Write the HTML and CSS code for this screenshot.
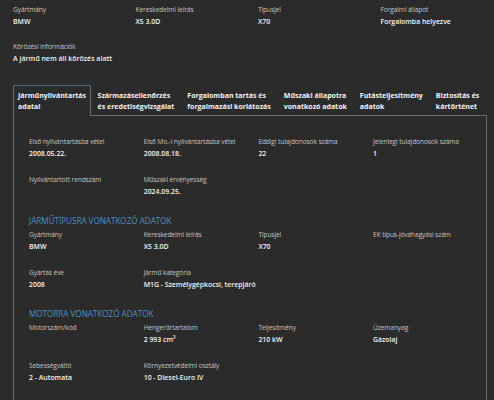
FILE: index.html
```html
<!DOCTYPE html>
<html lang="hu">
<head>
<meta charset="utf-8">
<link rel="stylesheet" href="styles.css">
</head>
<body>
<div class="summary">
  <div class="grid4">
    <div class="field"><div class="label">Gyártmány</div><div class="value">BMW</div></div>
    <div class="field"><div class="label">Kereskedelmi leírás</div><div class="value">X5 3.0D</div></div>
    <div class="field"><div class="label">Típusjel</div><div class="value">X70</div></div>
    <div class="field"><div class="label">Forgalmi állapot</div><div class="value">Forgalomba helyezve</div></div>
  </div>
  <div class="field wanted"><div class="label">Körözési információk</div><div class="value big">A jármű nem áll körözés alatt</div></div>
</div>

<div class="tabs">
  <div class="tab active">Járműnyilvántartás<br>adatai</div>
  <div class="tab">Származásellenőrzés<br>és eredetiségvizsgálat</div>
  <div class="tab">Forgalomban tartás és<br>forgalmazási korlátozás</div>
  <div class="tab">Műszaki állapotra<br>vonatkozó adatok</div>
  <div class="tab">Futásteljesítmény<br>adatok</div>
  <div class="tab">Biztosítás és<br>kártörténet</div>
</div>

<div class="panel">
  <div class="pgrid">
    <div class="field"><div class="label">Első nyilvántartásba vétel</div><div class="value">2008.05.22.</div></div>
    <div class="field"><div class="label">Első Mo.-i nyilvántartásba vétel</div><div class="value">2008.08.18.</div></div>
    <div class="field"><div class="label">Eddigi tulajdonosok száma</div><div class="value">22</div></div>
    <div class="field"><div class="label">Jelenlegi tulajdonosok száma</div><div class="value">1</div></div>
    <div class="field"><div class="label">Nyilvántartott rendszám</div><div class="value"></div></div>
    <div class="field"><div class="label">Műszaki érvényesség</div><div class="value">2024.09.25.</div></div>
  </div>

  <h2 class="section">JÁRMŰTÍPUSRA VONATKOZÓ ADATOK</h2>
  <div class="pgrid">
    <div class="field"><div class="label">Gyártmány</div><div class="value">BMW</div></div>
    <div class="field"><div class="label">Kereskedelmi leírás</div><div class="value">X5 3.0D</div></div>
    <div class="field"><div class="label">Típusjel</div><div class="value">X70</div></div>
    <div class="field"><div class="label">EK típus-jóváhagyási szám</div><div class="value"></div></div>
    <div class="field"><div class="label">Gyártás éve</div><div class="value">2008</div></div>
    <div class="field span3"><div class="label">Jármű kategória</div><div class="value">M1G - Személygépkocsi, terepjáró</div></div>
  </div>

  <h2 class="section">MOTORRA VONATKOZÓ ADATOK</h2>
  <div class="pgrid">
    <div class="field"><div class="label">Motorszám/kód</div><div class="value"></div></div>
    <div class="field"><div class="label">Hengerűrtartalom</div><div class="value">2 993 cm³</div></div>
    <div class="field"><div class="label">Teljesítmény</div><div class="value">210 kW</div></div>
    <div class="field"><div class="label">Üzemanyag</div><div class="value">Gázolaj</div></div>
    <div class="field"><div class="label">Sebességváltó</div><div class="value">2 - Automata</div></div>
    <div class="field span3"><div class="label">Környezetvédelmi osztály</div><div class="value">10 - Diesel-Euro IV</div></div>
  </div>
</div>
</body>
</html>
```

FILE: styles.css
```css
html, body {
  margin: 0;
  padding: 0;
  background: #2b2b2b;
  color: #eeeeee;
  font-family: "Open Sans", "DejaVu Sans", sans-serif;
}

.summary {
  padding: 3.5px 0 0 13px;
}

.grid4 {
  display: grid;
  grid-template-columns: repeat(4, 122.5px);
}

.field {
  height: 38px;
}

.label {
  font-size: 6.6px;
  letter-spacing: -0.1px;
  line-height: 11px;
  color: #c4c4c4;
  white-space: nowrap;
}

.value {
  font-size: 6.9px;
  line-height: 13px;
  font-weight: 600;
  color: #f4f4f4;
  min-height: 13px;
  white-space: nowrap;
}

.wanted {
  margin-top: -1px;
}

.value.big {
  font-size: 7px;
}

.tabs {
  display: flex;
  margin: 0 0 0 13px;
  padding-top: 6.5px;
}

.tab {
  padding: 3.5px 5.5px;
  font-size: 7px;
  line-height: 11px;
  font-weight: 700;
  color: #f4f4f4;
  border: 1px solid transparent;
  border-bottom: none;
  white-space: nowrap;
}

.tab.active {
  border-color: #6a6a6a;
  border-top-color: #4a6a8c;
  margin-bottom: -1px;
  padding-bottom: 4.5px;
  background: #2b2b2b;
  position: relative;
  z-index: 1;
  padding-left: 4px;
  padding-right: 4px;
}

.panel {
  margin-left: 13px;
  width: 474px;
  border: 1px solid #6a6a6a;
  padding: 20px 0 0 15px;
  box-sizing: border-box;
  min-height: 300px;
}

.pgrid {
  display: grid;
  grid-template-columns: repeat(4, 114.7px);
}

.span3 {
  grid-column: span 3;
}

.section {
  margin: 3px 0 2px;
  font-size: 8.1px;
  line-height: 12px;
  font-weight: 400;
  color: #4a90c8;
}
```
